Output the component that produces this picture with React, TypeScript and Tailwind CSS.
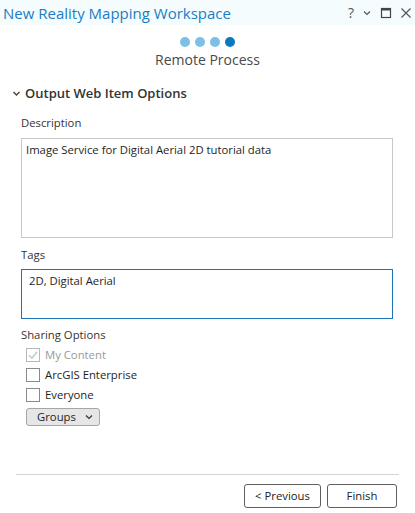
import { useState } from "react";

const font = { fontFamily: '"Open Sans", "Noto Sans", sans-serif' };

function Check({ checked, disabled }: { checked?: boolean; disabled?: boolean }) {
  return (
    <span className="flex h-[14px] w-[14px] items-center justify-center border border-[#8a8a8a] bg-white">
      {checked && (
        <svg width="12" height="12" viewBox="0 0 12 12" fill="none">
          <path
            d="M2 6.2 L4.8 9 L10 3"
            stroke={disabled ? "#a8a8a8" : "#333"}
            strokeWidth="1.6"
          />
        </svg>
      )}
    </span>
  );
}

function Option({ label, checked, disabled }: { label: string; checked?: boolean; disabled?: boolean }) {
  return (
    <label className="flex h-[20px] items-center gap-[5px] pl-[5px]">
      <span className={disabled ? "opacity-60" : ""}>
        <Check checked={checked} disabled={disabled} />
      </span>
      <span className={disabled ? "text-[#9a9a9a]" : "text-[#1e1e1e]"}>{label}</span>
    </label>
  );
}

export default function App() {
  const [desc] = useState("Image Service for Digital Aerial 2D tutorial data");
  return (
    <div className="flex h-[513px] w-[415px] flex-col bg-white text-[11.3px] leading-[18px] text-[#333]" style={font}>
      {/* title bar */}
      <div className="flex h-[25px] items-center justify-between bg-[#f5fcfe] pl-[3px] pr-[3px]">
        <span className="text-[15px] text-[#1b7dc2]">New Reality Mapping Workspace</span>
        <div className="flex items-center gap-[8px] text-[#555]">
          <span className="ml-[4px] text-[14px] leading-none">?</span>
          <svg width="10" height="10" viewBox="0 0 10 10" fill="none">
            <path d="M2 3.5 L5 6.5 L8 3.5" stroke="#555" strokeWidth="1.2" />
          </svg>
          <svg width="12" height="12" viewBox="0 0 12 12" fill="none">
            <rect x="1.5" y="1.5" width="9" height="9" stroke="#444" strokeWidth="1.2" />
            <rect x="1.5" y="1.5" width="9" height="2" fill="#444" />
          </svg>
          <svg width="12" height="12" viewBox="0 0 12 12" fill="none">
            <path d="M1.5 1.5 L10.5 10.5 M10.5 1.5 L1.5 10.5" stroke="#555" strokeWidth="1.2" />
          </svg>
        </div>
      </div>

      {/* steps */}
      <div className="mt-[12px] flex flex-col items-center">
        <div className="flex gap-[5px]">
          <span className="h-[10px] w-[10px] rounded-full bg-[#7cc0e6]" />
          <span className="h-[10px] w-[10px] rounded-full bg-[#7cc0e6]" />
          <span className="h-[10px] w-[10px] rounded-full bg-[#7cc0e6]" />
          <span className="h-[10px] w-[10px] rounded-full bg-[#0a79bf]" />
        </div>
        <span className="mt-[2px] text-[14px] leading-[22px] text-[#4a4a4a]">Remote Process</span>
      </div>

      {/* section */}
      <div className="mt-[12px] flex items-center gap-[4px] pl-[12px]">
        <svg width="9" height="9" viewBox="0 0 9 9" fill="none">
          <path d="M1.5 3 L4.5 6 L7.5 3" stroke="#444" strokeWidth="1.4" />
        </svg>
        <span className="text-[13px] font-semibold leading-[21px] text-[#333]">Output Web Item Options</span>
      </div>

      <div className="flex flex-col px-[21px] pr-[22px]">
        <span className="mt-[10px] text-[#333]">Description</span>
        <div className="mt-[6px] h-[100px] border border-[#c8c8c8] px-[4px] py-[2px] text-[#1e1e1e]">{desc}</div>

        <span className="mt-[8px] text-[#333]">Tags</span>
        <div className="mt-[5px] h-[50px] border border-[#1b73b8] px-[7px] py-[2px] text-[#1e1e1e]">
          2D, Digital Aerial
        </div>

        <span className="mt-[7px] text-[#333]">Sharing Options</span>
        <div className="mt-[1px] flex flex-col">
          <Option label="My Content" checked disabled />
          <Option label="ArcGIS Enterprise" />
          <Option label="Everyone" />
        </div>
        <div className="ml-[5px] mt-[3px] flex h-[18px] w-[74px] items-center justify-between rounded-[3px] border border-[#a6a6a6] bg-[#e6e6e6] pl-[10px] pr-[6px] text-[#1e1e1e]">
          <span>Groups</span>
          <svg width="8" height="8" viewBox="0 0 8 8" fill="none">
            <path d="M1 2.5 L4 5.5 L7 2.5" stroke="#333" strokeWidth="1.2" />
          </svg>
        </div>
      </div>

      <div className="flex-1" />
      <div className="mx-[16px] h-px bg-[#d4d4d4]" />
      <div className="flex justify-end gap-[6px] pb-[5px] pr-[18px] pt-[9px]">
        <button className="h-[24px] w-[77px] rounded-[3px] border border-[#5e5e5e] bg-white text-[#222]">
          &lt; Previous
        </button>
        <button className="h-[24px] w-[70px] rounded-[3px] border border-[#5e5e5e] bg-white text-[#222]">
          Finish
        </button>
      </div>
    </div>
  );
}
